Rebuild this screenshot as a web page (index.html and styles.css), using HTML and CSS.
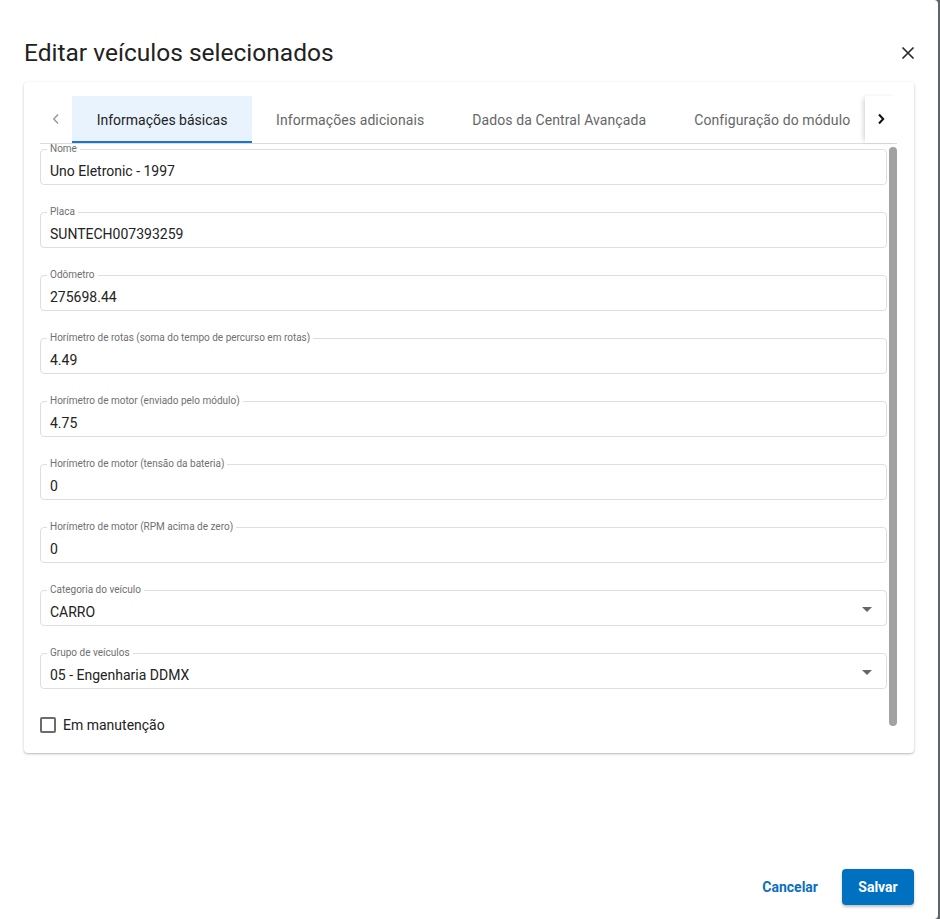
FILE: index.html
```html
<!DOCTYPE html>
<html lang="pt">
<head>
<meta charset="utf-8">
<title>Editar veículos selecionados</title>
<link rel="stylesheet" href="styles.css">
</head>
<body>
<div class="dialog">
  <div class="dialog-header">
    <h1 class="dialog-title">Editar veículos selecionados</h1>
    <button class="close-btn" aria-label="Fechar">
      <svg width="14" height="14" viewBox="0 0 14 14"><path d="M1.5 1.5 L12.5 12.5 M12.5 1.5 L1.5 12.5" stroke="#2b2b2b" stroke-width="1.7" fill="none"/></svg>
    </button>
  </div>

  <div class="card">
    <div class="tabs">
      <button class="tab-arrow tab-arrow-left" aria-label="Anterior">
        <svg width="10" height="12" viewBox="0 0 10 12"><path d="M7 1.5 L2.8 6 L7 10.5" stroke="#9a9a9a" stroke-width="1.5" fill="none"/></svg>
      </button>
      <div class="tab-list">
        <div class="tab tab-active">Informações básicas</div>
        <div class="tab">Informações adicionais</div>
        <div class="tab">Dados da Central Avançada</div>
        <div class="tab">Configuração do módulo</div>
      </div>
      <button class="tab-arrow tab-arrow-right" aria-label="Próximo">
        <svg width="10" height="12" viewBox="0 0 10 12"><path d="M3 1.5 L7.2 6 L3 10.5" stroke="#111" stroke-width="2" fill="none"/></svg>
      </button>
    </div>

    <div class="content">
      <div class="fields">
        <fieldset class="field"><legend>Nome</legend><div class="value">Uno Eletronic - 1997</div></fieldset>
        <fieldset class="field"><legend>Placa</legend><div class="value">SUNTECH007393259</div></fieldset>
        <fieldset class="field"><legend>Odômetro</legend><div class="value">275698.44</div></fieldset>
        <fieldset class="field"><legend>Horímetro de rotas (soma do tempo de percurso em rotas)</legend><div class="value">4.49</div></fieldset>
        <fieldset class="field"><legend>Horímetro de motor (enviado pelo módulo)</legend><div class="value">4.75</div></fieldset>
        <fieldset class="field"><legend>Horímetro de motor (tensão da bateria)</legend><div class="value">0</div></fieldset>
        <fieldset class="field"><legend>Horímetro de motor (RPM acima de zero)</legend><div class="value">0</div></fieldset>
        <fieldset class="field field-select"><legend>Categoria do veículo</legend><div class="value">CARRO</div><span class="caret"></span></fieldset>
        <fieldset class="field field-select"><legend>Grupo de veículos</legend><div class="value">05 - Engenharia DDMX</div><span class="caret"></span></fieldset>
        <label class="check-row"><span class="checkbox"></span><span class="check-label">Em manutenção</span></label>
      </div>
      <div class="scrollbar"></div>
    </div>
  </div>

  <div class="dialog-footer">
    <button class="btn btn-text">Cancelar</button>
    <button class="btn btn-primary">Salvar</button>
  </div>
</div>
</body>
</html>
```

FILE: styles.css
```css
* { box-sizing: border-box; }
html, body { margin: 0; padding: 0; }
body {
  width: 940px;
  height: 919px;
  background: #5f6466;
  font-family: Roboto, "Noto Sans", "Liberation Sans", sans-serif;
  color: #222;
  overflow: hidden;
}
.dialog {
  width: 938px;
  height: 919px;
  background: #fff;
  border-radius: 0 4px 4px 0;
  display: flex;
  flex-direction: column;
  padding: 0 24px 14px 24px;
}
.dialog-header {
  display: flex;
  align-items: center;
  justify-content: space-between;
  height: 82px;
  padding-top: 24px;
}
.dialog-title {
  margin: 0;
  font-size: 24.5px;
  font-weight: 400;
  line-height: 32px;
  color: #222;
}
.close-btn {
  border: 0;
  background: none;
  padding: 0;
  width: 14px;
  height: 14px;
  margin-right: -1px;
  display: flex;
  cursor: pointer;
}
.card {
  border-radius: 4px;
  box-shadow: 0 1px 3px rgba(0,0,0,0.22), 0 1px 1px rgba(0,0,0,0.08);
  padding: 14px 17px 13px 16px;
  display: flex;
  flex-direction: column;
}
.tabs {
  display: flex;
  height: 48px;
  border-bottom: 1px solid #dcdcdc;
}
.tab-arrow {
  flex: 0 0 32px;
  border: 0;
  background: #fff;
  padding: 0;
  display: flex;
  align-items: center;
  justify-content: center;
  padding-bottom: 1px;
}
.tab-arrow-right {
  box-shadow: -3px 0 5px -2px rgba(0,0,0,0.2);
  position: relative;
  z-index: 1;
}
.tab-list {
  flex: 1;
  min-width: 0;
  display: flex;
  overflow: hidden;
}
.tab {
  flex: 0 0 auto;
  padding: 0 24px;
  display: flex;
  align-items: center;
  font-size: 14px;
  color: #666;
  white-space: nowrap;
  letter-spacing: 0.1px;
}
.tab-active {
  background: #e9f3fd;
  color: #222;
  box-shadow: inset 0 -2px 0 #1976d2;
  width: 180px;
  justify-content: center;
  padding: 0;
  letter-spacing: 0;
}
.content {
  display: flex;
  gap: 2px;
}
.fields {
  flex: 1;
  display: flex;
  flex-direction: column;
  gap: 22px;
}
.field {
  position: relative;
  margin: 0;
  border: 1px solid #dedede;
  border-radius: 4px;
  padding: 7px 9px 3px 9px;
  min-width: 0;
}
.field legend {
  font-size: 10px;
  line-height: 10px;
  color: #707070;
  padding: 0 3px;
  margin-left: -3px;
}
.value {
  font-size: 14px;
  line-height: 20px;
  color: #222;
}
.caret {
  position: absolute;
  right: 14px;
  top: 12px;
  width: 0;
  height: 0;
  border-left: 5px solid transparent;
  border-right: 5px solid transparent;
  border-top: 5px solid #666;
}
.check-row {
  display: flex;
  align-items: center;
  gap: 7px;
  margin-top: 4px;
  height: 20px;
  margin-bottom: 5px;
}
.checkbox {
  width: 16px;
  height: 16px;
  border: 2px solid #6b6b6b;
  border-radius: 2px;
}
.check-label {
  font-size: 14px;
  color: #222;
}
.scrollbar {
  flex: 0 0 8px;
  margin-top: 3px;
  height: 579px;
  background: #a2a2a2;
  border-radius: 4px;
}
.dialog-footer {
  margin-top: auto;
  display: flex;
  justify-content: flex-end;
  align-items: center;
  gap: 8px;
}
.btn {
  height: 36px;
  border: 0;
  border-radius: 4px;
  font-family: inherit;
  font-size: 14px;
  font-weight: 700;
  cursor: pointer;
}
.btn-text {
  background: none;
  color: #0a6fbf;
  padding: 0 16px;
}
.btn-primary {
  background: #0070c0;
  color: #fff;
  width: 72px;
  box-shadow: 0 2px 3px rgba(0,0,0,0.25);
}
```
